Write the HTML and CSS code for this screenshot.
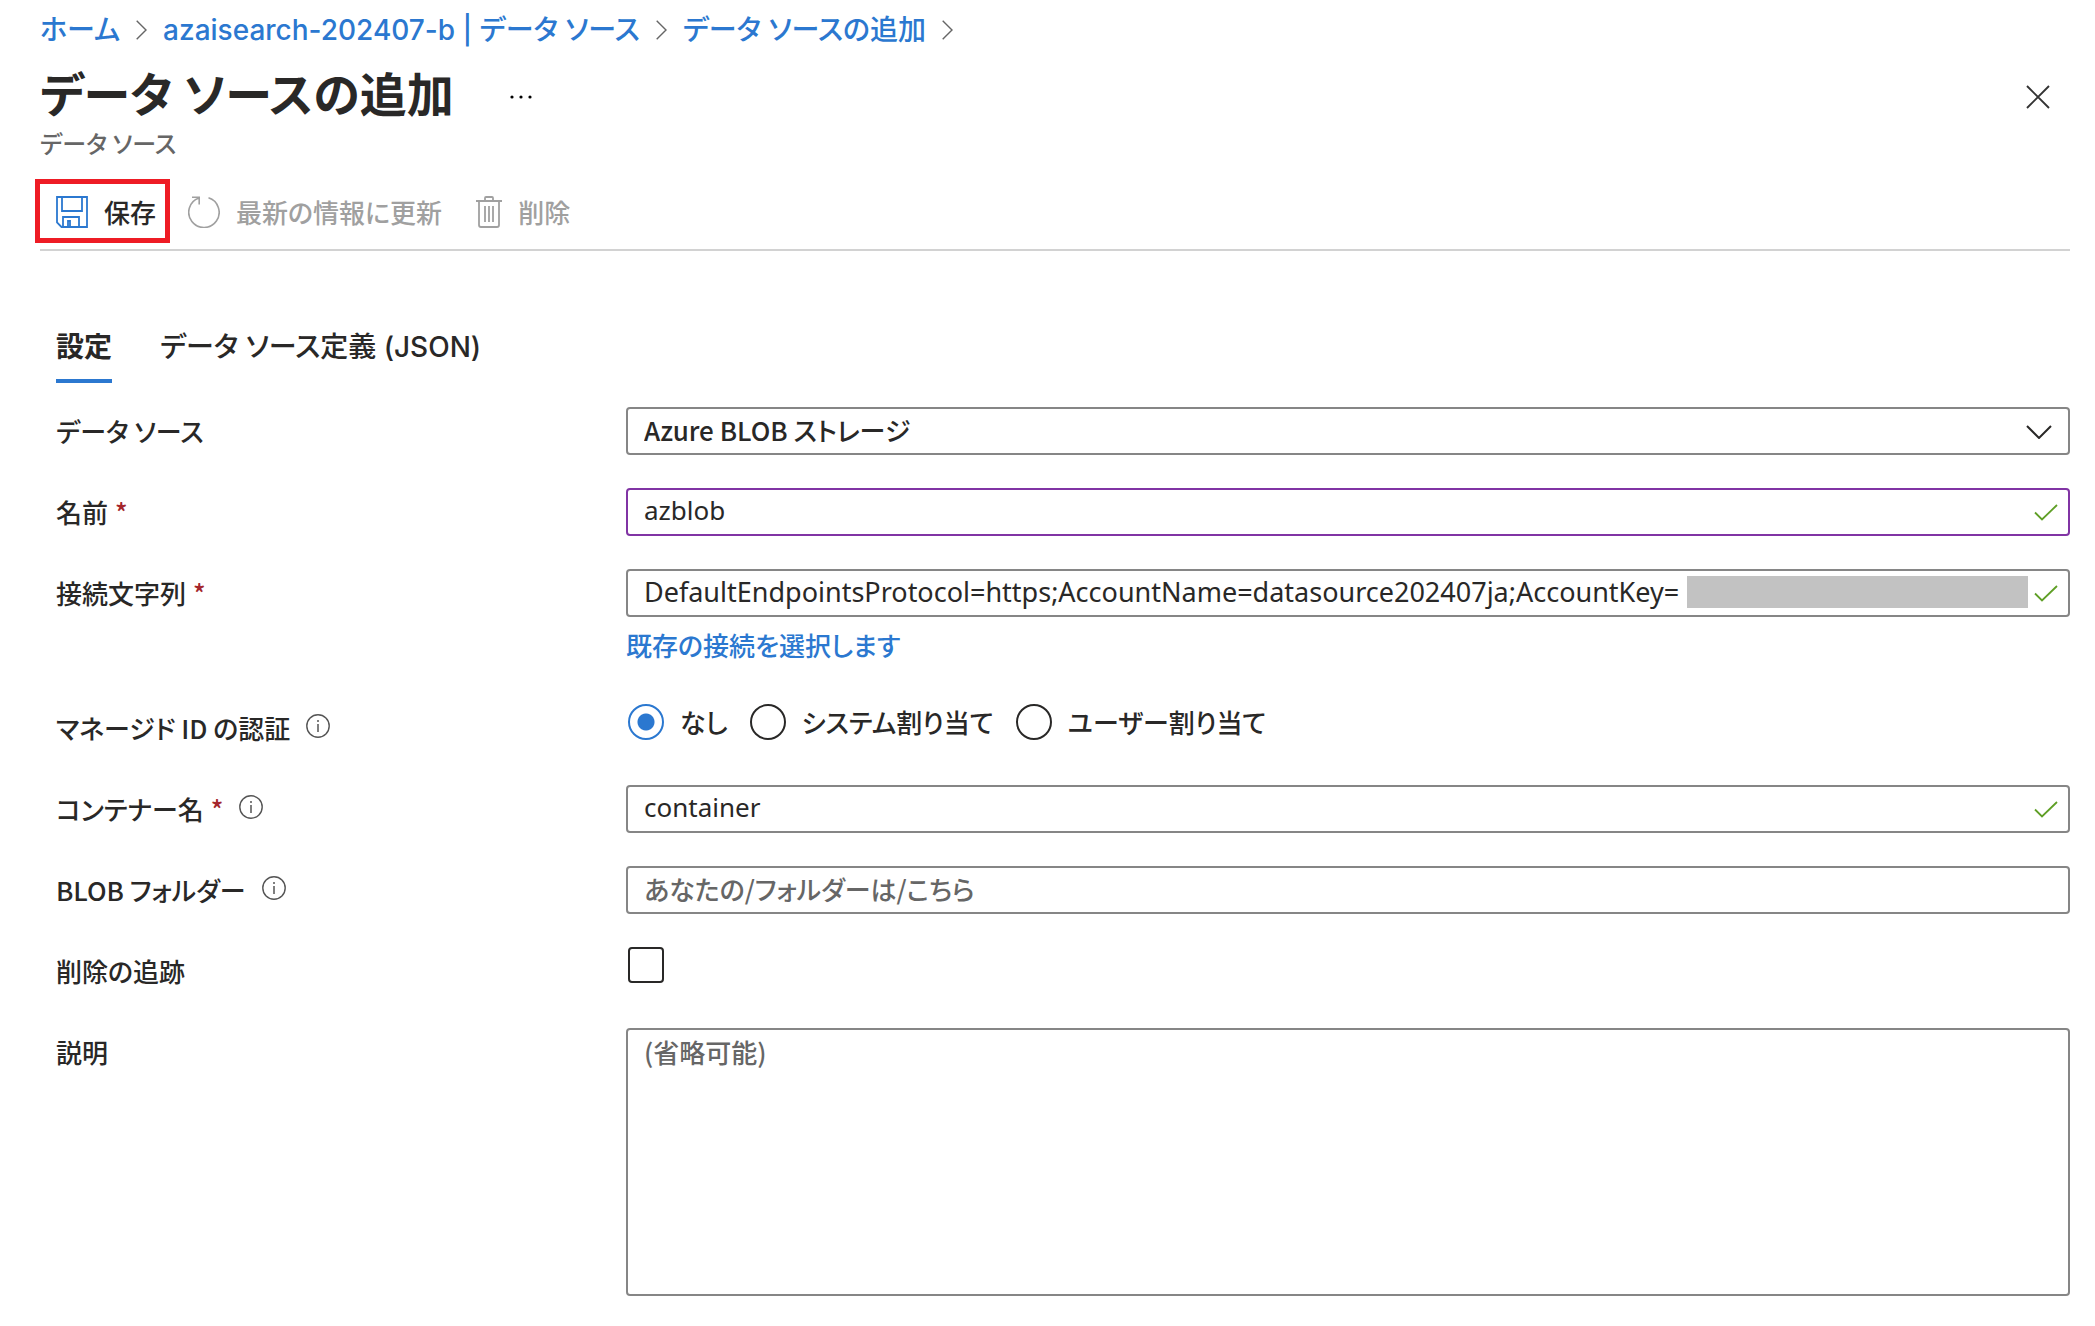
FILE: index.html
```html
<!DOCTYPE html>
<html lang="ja">
<head>
<meta charset="utf-8">
<title>データ ソースの追加</title>
<link rel="stylesheet" href="styles.css">
</head>
<body>
<svg class="sprite" aria-hidden="true">
  <symbol id="chevron-right" viewBox="0 0 11 20"><path d="M.7.7 10 10 .7 19.300" fill="none" stroke="currentColor" stroke-width="1.400"/></symbol>
  <symbol id="check" viewBox="0 0 24 17"><path d="M1 8.500 8 15.500 23 1" fill="none" stroke="currentColor" stroke-width="1.800"/></symbol>
  <symbol id="info" viewBox="0 0 24 24"><circle cx="12" cy="12" r="11.200" fill="none" stroke="currentColor" stroke-width="1.400"/><path d="M12 10v8" stroke="currentColor" stroke-width="1.500"/><circle cx="12" cy="7" r="1"/></symbol>
</svg>

<nav class="breadcrumb" aria-label="階層リンク">
  <a href="#">ホーム</a>
  <svg class="crumb-sep"><use href="#chevron-right"/></svg>
  <a href="#">azaisearch-202407-b | データ ソース</a>
  <svg class="crumb-sep"><use href="#chevron-right"/></svg>
  <a href="#">データ ソースの追加</a>
  <svg class="crumb-sep"><use href="#chevron-right"/></svg>
</nav>

<header class="header">
  <div class="title-row">
    <h1 class="title">データ ソースの追加</h1>
    <button class="icon-button more" type="button" aria-label="その他">
      <svg width="22" height="4" viewBox="0 0 22 4"><circle cx="2" cy="2" r="1.600"/><circle cx="11" cy="2" r="1.600"/><circle cx="20" cy="2" r="1.600"/></svg>
    </button>
    <button class="icon-button close" type="button" aria-label="閉じる">
      <svg width="24" height="24" viewBox="0 0 24 24"><path d="m1 1 22 22M23 1 1 23" fill="none" stroke="currentColor" stroke-width="1.900"/></svg>
    </button>
  </div>
  <p class="subtitle">データ ソース</p>
</header>

<div class="toolbar">
  <button class="command command-save" type="button">
    <svg width="32" height="32" viewBox="0 0 32 32" fill="none" stroke="currentColor" stroke-width="1.800"><path d="M1 1h30v30H5.500L1 26.500zM6 1v14h20V1M7 31V21h16v10M12 31v-6h2v6"/></svg>
    保存
  </button>
  <button class="command" type="button" disabled>
    <svg width="32" height="32" viewBox="0 0 32 32" fill="none" stroke="currentColor" stroke-width="1.600"><path d="M20.500 1.800A15.200 15.200 0 1 1 10.800 2M4 1.200h7.200v7.300"/></svg>
    最新の情報に更新
  </button>
  <button class="command" type="button" disabled>
    <svg width="26" height="32" viewBox="0 0 26 32" fill="none" stroke="currentColor" stroke-width="1.800"><path d="M0 5h26M9 5V2q0-1 1-1h6q1 0 1 1v3M3 5v24q0 2 2 2h16q2 0 2-2V5M9 10v16M13 10v16M17 10v16"/></svg>
    削除
  </button>
</div>

<main class="content">
  <div class="tabs" role="tablist">
    <button class="tab tab-active" type="button" role="tab" aria-selected="true">設定</button>
    <button class="tab" type="button" role="tab" aria-selected="false">データ ソース定義 (JSON)</button>
  </div>

  <form class="form">
    <div class="row">
      <label class="label" for="source">データ ソース</label>
      <div class="field">
        <select class="control" id="source"><option>Azure BLOB ストレージ</option></select>
        <svg class="select-arrow" viewBox="0 0 26 14"><path d="m1 1 12 12L25 1" fill="none" stroke="currentColor" stroke-width="2"/></svg>
      </div>
    </div>
    <div class="row">
      <label class="label" for="name">名前 <span class="required">*</span></label>
      <div class="field">
        <input class="control control-latin control-edited" id="name" type="text" value="azblob">
        <svg class="valid"><use href="#check"/></svg>
      </div>
    </div>
    <div class="row">
      <label class="label" for="connection">接続文字列 <span class="required">*</span></label>
      <div>
        <div class="field">
          <input class="control control-latin control-connection" id="connection" type="text" value="DefaultEndpointsProtocol=https;AccountName=datasource202407ja;AccountKey=">
          <span class="redaction"></span>
          <svg class="valid"><use href="#check"/></svg>
        </div>
        <a class="connection-link" href="#">既存の接続を選択します</a>
      </div>
    </div>
    <div class="row">
      <div class="label" id="identity-label">マネージド ID の認証 <svg class="info"><use href="#info"/></svg></div>
      <div class="radios" role="radiogroup" aria-labelledby="identity-label">
        <label class="radio"><input class="radio-input" type="radio" name="identity" checked>なし</label>
        <label class="radio"><input class="radio-input" type="radio" name="identity">システム割り当て</label>
        <label class="radio"><input class="radio-input" type="radio" name="identity">ユーザー割り当て</label>
      </div>
    </div>
    <div class="row">
      <label class="label" for="container">コンテナー名 <span class="required">*</span> <svg class="info"><use href="#info"/></svg></label>
      <div class="field">
        <input class="control control-latin" id="container" type="text" value="container">
        <svg class="valid"><use href="#check"/></svg>
      </div>
    </div>
    <div class="row">
      <label class="label" for="folder">BLOB フォルダー <svg class="info"><use href="#info"/></svg></label>
      <div class="field"><input class="control" id="folder" type="text" placeholder="あなたの/フォルダーは/こちら"></div>
    </div>
    <div class="row">
      <label class="label" for="tracking">削除の追跡</label>
      <div class="field"><input class="checkbox" id="tracking" type="checkbox"></div>
    </div>
    <div class="row">
      <label class="label" for="description">説明</label>
      <div class="field"><textarea class="control control-area" id="description" placeholder="(省略可能)"></textarea></div>
    </div>
  </form>
</main>
</body>
</html>
```

FILE: styles.css
```css
* { box-sizing: border-box; }

body {
  margin: 0;
  padding: 8px 25px 24px 40px;
  background: #fff;
  color: #292827;
  font-family: "Noto Sans CJK JP", sans-serif;
  font-size: 26px;
  font-weight: 500;
  font-feature-settings: "palt";
}

button, input, select, textarea {
  margin: 0;
  color: inherit;
  font: inherit;
  font-feature-settings: inherit;
}

button { padding: 0; border: 0; background: none; }
a { color: #2b78d0; text-decoration: none; }
svg { flex: none; display: block; }
.sprite { position: absolute; width: 0; height: 0; }

.breadcrumb {
  display: flex;
  align-items: center;
  gap: 16px;
  font-family: Inter, "Noto Sans CJK JP", sans-serif;
  font-size: 28px;
  line-height: 44px;
}
.crumb-sep { width: 11px; height: 20px; color: #666; }

.header { padding-top: 8px; }
.title-row { display: flex; align-items: center; }
.title { margin: 0; padding-bottom: 4px; font-size: 47px; line-height: 64px; font-weight: 700; }
.icon-button { display: flex; margin-top: 5px; color: #333; }
.more { margin-left: 56px; }
.close { margin-left: auto; margin-right: 20px; }
.subtitle { margin: 0; color: #666; font-size: 24px; line-height: 30px; }

.toolbar {
  display: flex;
  align-items: center;
  gap: 34px;
  margin-top: 21px;
  padding-bottom: 6px;
  border-bottom: 2px solid #d2d2d2;
}
.command { display: flex; align-items: center; gap: 16px; padding-top: 2px; line-height: 34px; white-space: nowrap; }
.command:disabled { color: #a0a0a0; }
.command-save { height: 64px; margin-left: -5px; margin-right: -16px; padding: 2px 9px 0 16px; border: 5px solid #ee1c25; }
.command-save svg { color: #2b78d0; }

.content { padding-left: 16px; }
.tabs { display: flex; gap: 48px; margin-top: 64px; }
.tab {
  border-bottom: 4px solid transparent;
  font-family: Inter, "Noto Sans CJK JP", sans-serif;
  font-size: 28px;
  line-height: 64px;
}
.tab-active { border-bottom-color: #2b78d0; font-weight: 700; }

.form { display: grid; gap: 31px; margin-top: 24px; }
.row { display: grid; grid-template-columns: 570px 1fr; min-height: 50px; align-items: start; }
.label { display: flex; align-items: center; gap: 7px; line-height: 48px; }
.required { color: #a4262c; }
.info { width: 24px; height: 24px; margin: 0 0 4px 9px; color: #555; fill: #555; }

.field { position: relative; display: flex; }
.control {
  width: 100%;
  height: 48px;
  padding: 0 50px 4px 16px;
  border: 2px solid #868686;
  border-radius: 4px;
  background: #fff;
  appearance: none;
  outline: none;
}
.control::placeholder { color: #666; opacity: 1; }
.control-latin { font-family: "Noto Sans", sans-serif; font-weight: 400; }
.control-edited { border-color: #8134a4; }
.control-connection { font-size: 27px; }
.control-area { height: 268px; padding-top: 4px; line-height: 36px; resize: none; }
.select-arrow { position: absolute; top: 18px; right: 18px; width: 26px; height: 14px; pointer-events: none; }
.valid { position: absolute; top: 16px; right: 12px; width: 24px; height: 17px; color: #5f9f26; }
.redaction { position: absolute; top: 7px; right: 42px; bottom: 9px; left: 1061px; background: #c2c2c2; }
.connection-link { display: block; width: max-content; margin: 5px 0; line-height: 46px; }

.radios { display: flex; gap: 22px; padding-left: 2px; }
.radio { display: flex; align-items: center; gap: 16px; line-height: 36px; }
.radio-input, .checkbox { appearance: none; width: 36px; height: 36px; border: 2px solid #292827; }
.radio-input { border-radius: 50%; }
.radio-input:checked { border-color: #2b78d0; background: radial-gradient(circle, #2b78d0 8px, transparent 9px); }
.checkbox { margin-left: 2px; border-radius: 4px; }
```
